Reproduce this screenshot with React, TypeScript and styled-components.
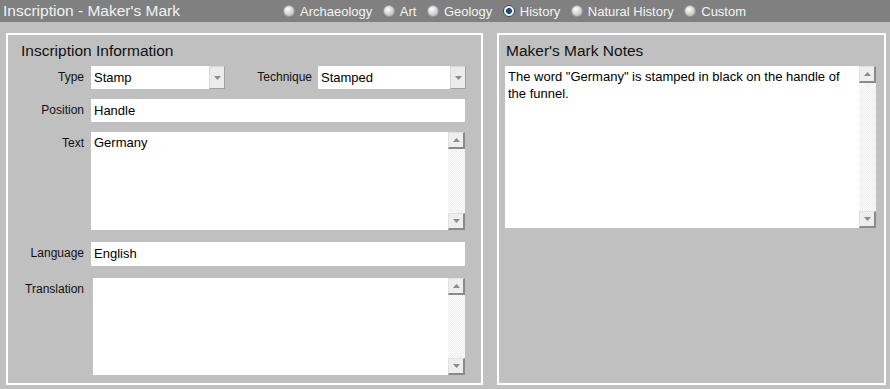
import React from "react";
import styled, { createGlobalStyle } from "styled-components";

const GlobalStyle = createGlobalStyle`
  html, body {
    margin: 0;
    padding: 0;
    background: #c0c0c0;
  }
  body {
    font-family: "Liberation Sans", Arial, sans-serif;
  }
`;

const Page = styled.div`
  width: 890px;
  height: 389px;
  background: #c0c0c0;
  display: flex;
  flex-direction: column;
`;

const Header = styled.div`
  height: 22px;
  background: #808080;
  display: flex;
  align-items: center;
`;

const HeaderTitle = styled.div`
  width: 283px;
  padding-left: 3px;
  box-sizing: border-box;
  font-size: 15.5px;
  color: #f2f2f2;
  line-height: 22px;
`;

const RadioGroup = styled.div`
  display: flex;
  align-items: center;
  gap: 10.5px;
`;

const RadioItem = styled.label`
  display: flex;
  align-items: center;
  gap: 5px;
  font-size: 13px;
  color: #f4f4f4;
`;

const RadioDot = styled.span<{ $checked?: boolean }>`
  width: 12px;
  height: 12px;
  border-radius: 50%;
  box-sizing: border-box;
  border: 1px solid ${(p) => (p.$checked ? "#3a4a5a" : "#9a9a9a")};
  background: ${(p) =>
    p.$checked
      ? "radial-gradient(circle at 50% 50%, #1d5f9e 0, #0a3a6a 2.5px, #e8e8e8 3.2px, #ffffff 5px)"
      : "radial-gradient(circle at 40% 35%, #ffffff 0, #e2e2e2 3px, #c4c4c4 6px)"};
`;

const Main = styled.div`
  flex: 1;
  display: flex;
  gap: 14px;
  padding: 11px 0 0 6px;
`;

const Panel = styled.div<{ $width: number }>`
  width: ${(p) => p.$width}px;
  height: 352px;
  box-sizing: border-box;
  border: 2px solid #ffffff;
  display: flex;
  flex-direction: column;
`;

const PanelTitle = styled.div<{ $left: number }>`
  font-size: 15.5px;
  color: #111;
  line-height: 18px;
  padding: 7px 0 0 ${(p) => p.$left}px;
  height: 31px;
  box-sizing: border-box;
`;

const Form = styled.div`
  display: grid;
  grid-template-columns: 76px 375px;
  column-gap: 7px;
  row-gap: 10px;
`;

const Label = styled.div<{ $top?: number }>`
  font-size: 12px;
  color: #111;
  text-align: right;
  padding-top: 4px;
  margin-top: ${(p) => p.$top ?? 0}px;
  white-space: nowrap;
`;

const FieldRow = styled.div`
  display: flex;
  align-items: flex-start;
`;

const InlineLabel = styled(Label)`
  width: 93px;
  padding-right: 6px;
  box-sizing: border-box;
`;

const SelectBox = styled.div<{ $width: number }>`
  width: ${(p) => p.$width}px;
  height: 23px;
  background: #fff;
  display: flex;
  box-sizing: border-box;
`;

const SelectValue = styled.div`
  flex: 1;
  font-size: 13px;
  color: #000;
  padding: 4px 0 0 3px;
`;

const SelectButton = styled.div`
  width: 16px;
  height: 23px;
  box-sizing: border-box;
  background: #ececec;
  border: 1px solid #d8d8d8;
  border-right-color: #a0a0a0;
  border-bottom-color: #a0a0a0;
  display: flex;
  align-items: center;
  justify-content: center;
`;

const TextInput = styled.div<{ $top?: number; $height?: number }>`
  width: 374px;
  height: ${(p) => p.$height ?? 23}px;
  margin-top: ${(p) => p.$top ?? 0}px;
  background: #fff;
  font-size: 13px;
  color: #000;
  padding: 4px 0 0 3px;
  box-sizing: border-box;
`;

const TextArea = styled.div<{ $width: number; $height: number; $shift?: number; $top?: number }>`
  width: ${(p) => p.$width}px;
  height: ${(p) => p.$height}px;
  margin-left: ${(p) => p.$shift ?? 0}px;
  margin-top: ${(p) => p.$top ?? 0}px;
  background: #fff;
  display: flex;
  box-sizing: border-box;
`;

const TextAreaBody = styled.div`
  flex: 1;
  font-size: 13px;
  line-height: 17px;
  color: #000;
  padding: 2px 3px;
`;

const Scrollbar = styled.div`
  width: 17px;
  display: flex;
  flex-direction: column;
  background-color: #f4f4f4;
  background-image: repeating-conic-gradient(#ececec 0 25%, #ffffff 0 50%);
  background-size: 2px 2px;
`;

const ScrollTrack = styled.div`
  flex: 1;
`;

const ScrollButton = styled.div`
  width: 17px;
  height: 17px;
  box-sizing: border-box;
  background: #eeeeee;
  border: 1px solid #e0e0e0;
  border-right: 2px solid #8a8a8a;
  border-bottom: 2px solid #8a8a8a;
  display: flex;
  align-items: center;
  justify-content: center;
`;

const NotesArea = styled.div`
  padding-left: 6px;
`;

const Arrow = ({ down }: { down?: boolean }) => (
  <svg width="7" height="4" viewBox="0 0 7 4">
    <polygon points={down ? "0,0 7,0 3.5,4" : "0,4 7,4 3.5,0"} fill="#8c8c8c" />
  </svg>
);

const Select = ({ value, width }: { value: string; width: number }) => (
  <SelectBox $width={width}>
    <SelectValue>{value}</SelectValue>
    <SelectButton>
      <Arrow down />
    </SelectButton>
  </SelectBox>
);

const Area = ({
  text,
  width,
  height,
  shift,
  top,
}: {
  text: string;
  width: number;
  height: number;
  shift?: number;
  top?: number;
}) => (
  <TextArea $width={width} $height={height} $shift={shift} $top={top}>
    <TextAreaBody>{text}</TextAreaBody>
    <Scrollbar>
      <ScrollButton>
        <Arrow />
      </ScrollButton>
      <ScrollTrack />
      <ScrollButton>
        <Arrow down />
      </ScrollButton>
    </Scrollbar>
  </TextArea>
);

const categories = [
  { name: "Archaeology", checked: false },
  { name: "Art", checked: false },
  { name: "Geology", checked: false },
  { name: "History", checked: true },
  { name: "Natural History", checked: false },
  { name: "Custom", checked: false },
];

export default function App() {
  return (
    <Page>
      <GlobalStyle />
      <Header>
        <HeaderTitle>Inscription - Maker's Mark</HeaderTitle>
        <RadioGroup>
          {categories.map((c) => (
            <RadioItem key={c.name}>
              <RadioDot $checked={c.checked} />
              {c.name}
            </RadioItem>
          ))}
        </RadioGroup>
      </Header>
      <Main>
        <Panel $width={477}>
          <PanelTitle $left={13}>Inscription Information</PanelTitle>
          <Form>
            <Label>Type</Label>
            <FieldRow>
              <Select value="Stamp" width={134} />
              <InlineLabel>Technique</InlineLabel>
              <Select value="Stamped" width={148} />
            </FieldRow>
            <Label>Position</Label>
            <TextInput>Handle</TextInput>
            <Label>Text</Label>
            <Area text="Germany" width={374} height={98} />
            <Label $top={2}>Language</Label>
            <TextInput $top={2} $height={24}>English</TextInput>
            <Label $top={2}>Translation</Label>
            <Area text="" width={372} height={97} shift={2} top={2} />
          </Form>
        </Panel>
        <Panel $width={389}>
          <PanelTitle $left={7}>Maker's Mark Notes</PanelTitle>
          <NotesArea>
            <Area
              text={'The word "Germany" is stamped in black on the handle of the funnel.'}
              width={371}
              height={162}
            />
          </NotesArea>
        </Panel>
      </Main>
    </Page>
  );
}
